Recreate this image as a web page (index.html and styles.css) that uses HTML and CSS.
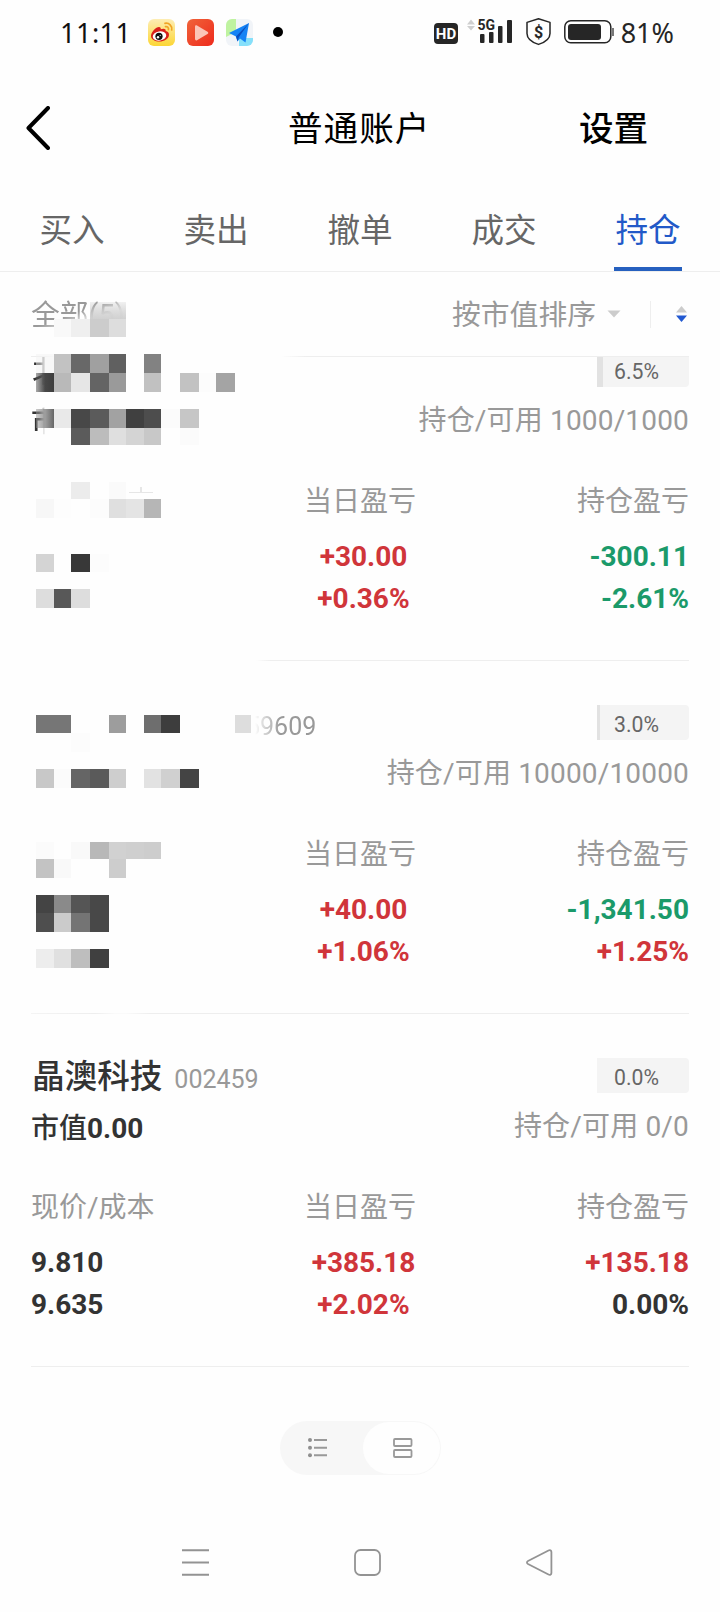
FILE: index.html
```html
<!DOCTYPE html>
<html lang="zh-CN">
<head>
    <meta charset="UTF-8">
    <meta name="viewport" content="width=device-width, initial-scale=1.0">
    <title>普通账户</title>
    <link rel="stylesheet" href="styles.css">
</head>
<body>
    <div class="status-bar">
        <span class="time">11:11</span>
        <div class="app-icons">
            <svg width="27" height="27" viewBox="0 0 27 27">
                <defs>
                    <linearGradient id="weiboBg" x1="0" y1="0" x2="0" y2="1">
                        <stop offset="0" stop-color="#fdedb4"/><stop offset="1" stop-color="#fcd635"/>
                    </linearGradient>
                </defs>
                <rect width="27" height="27" rx="6" fill="url(#weiboBg)"/>
                <path d="M3 17c0-4 5-9 8-9 1.500 0 2 1 1.700 2.300 2.300-1 5.500-1 5 1.800 2 .5 3.500 1.700 3.300 3.900-.3 4-5 6.500-9.500 6.500S3 20.500 3 17z" fill="#d9201a"/>
                <ellipse cx="11.500" cy="17" rx="6.800" ry="4.600" fill="#fff" transform="rotate(-8 11.500 17)"/>
                <circle cx="11" cy="17.300" r="3.600" fill="#111"/>
                <circle cx="10" cy="18.300" r="1.200" fill="#fff"/>
                <circle cx="12.200" cy="16.300" r=".6" fill="#fff"/>
                <path d="M17 4.300c4-.8 7.500 2.500 6.700 6.700M17.500 7.600c2-.4 3.400 1.200 2.900 3" fill="none" stroke="#f0a325" stroke-width="1.700" stroke-linecap="round"/>
            </svg>
            <svg width="27" height="27" viewBox="0 0 27 27">
                <defs>
                    <linearGradient id="videoBg" x1="0" y1="0" x2="1" y2="1">
                        <stop offset="0" stop-color="#f0643a"/><stop offset="1" stop-color="#ee2a1c"/>
                    </linearGradient>
                </defs>
                <rect width="27" height="27" rx="6" fill="url(#videoBg)"/>
                <path d="M8 7.500v12.500c0 1.200 1 1.700 2 1.200l10.500-6.200c1-.6 1-1.700 0-2.300L10 6.400C9 5.900 8 6.400 8 7.500z" fill="#fbc5b8"/>
            </svg>
            <svg width="27" height="27" viewBox="0 0 27 27">
                <rect width="27" height="27" rx="6" fill="#f1f4f8"/>
                <path d="M6 0h4v13L0 18V6a6 6 0 0 1 6-6z" fill="#bff3a0"/>
                <path d="M13 27V19h14v2a6 6 0 0 1-6 6z" fill="#86e0fa"/>
                <path d="M10 17l2.500 8V19z" fill="#fff"/>
                <path d="M23 4L3 14l7 3.500 1.500 5 2.500-3 5.500 4z" fill="#1583f5"/>
                <path d="M23 4L10 17.500l1.500 5 1.300-4.200z" fill="#0a4fc0"/>
            </svg>
            <span class="dot"></span>
        </div>
        <div class="system-icons">
            <svg width="182" height="32" viewBox="432 16 182 32">
                <rect x="434" y="23" width="24" height="21" rx="4" fill="#262626"/>
                <text x="446" y="39" class="hd-text">HD</text>
                <path d="M467 24.500l4-5 4 5zM467 26h8l-4 4.500z" fill="#cfcfcf"/>
                <text x="477.500" y="30" class="net-text">5G</text>
                <g fill="#262626">
                    <rect x="480" y="34" width="4.500" height="9" rx="1"/>
                    <rect x="489" y="32" width="4.500" height="11" rx="1"/>
                    <rect x="498" y="26" width="4.500" height="17" rx="1"/>
                    <rect x="507" y="20" width="5" height="23" rx="1"/>
                </g>
                <path d="M538.500 18.800l11.500 3.600v11c0 5.500-5.500 9-11.500 11-6-2-11.500-5.500-11.500-11v-11z" fill="none" stroke="#262626" stroke-width="1.500" stroke-linejoin="round"/>
                <text x="538.500" y="37.500" class="shield-text">$</text>
                <rect x="564.800" y="20.800" width="46" height="22" rx="6" fill="none" stroke="#262626" stroke-width="1.500"/>
                <rect x="568" y="24" width="33" height="16" rx="3" fill="#262626"/>
                <rect x="612" y="28" width="2" height="8" fill="#777"/>
            </svg>
            <span class="battery">81%</span>
        </div>
    </div>

    <div class="header">
        <svg class="back" width="24" height="44" viewBox="0 0 24 44">
            <path d="M22 2L2.500 22 22 42" fill="none" stroke="#000" stroke-width="4" stroke-linecap="round" stroke-linejoin="round"/>
        </svg>
        <span class="title">普通账户</span>
        <span class="settings">设置</span>
    </div>

    <div class="tabs">
        <div class="tab"><span>买入</span></div>
        <div class="tab"><span>卖出</span></div>
        <div class="tab"><span>撤单</span></div>
        <div class="tab"><span>成交</span></div>
        <div class="tab active"><span>持仓</span></div>
    </div>

    <div class="filter">
        <span class="all">全部(5)</span>
        <div class="sort">
            <span>按市值排序</span>
            <svg width="14" height="8" viewBox="0 0 14 8"><path d="M.5.500h13L7 7.500z" fill="#ccc"/></svg>
            <i class="divider"></i>
            <svg width="11" height="16" viewBox="0 0 11 16">
                <path d="M0 6.500L5.500 0 11 6.500z" fill="#ccc"/>
                <path d="M0 9.500h11L5.500 16z" fill="#2259d1"/>
            </svg>
        </div>
    </div>

    <div class="list">
        <div class="card first">
            <div class="card-top">
                <div class="name"><span class="rest rest-name">北</span></div>
                <div class="badge"><i style="width: 6.5%"></i><span>6.5%</span></div>
            </div>
            <div class="card-sub">
                <div class="value"><span class="rest">市</span></div>
                <div class="hold">持仓/可用 1000/1000</div>
            </div>
            <div class="cols">
                <div class="col left"></div>
                <div class="col mid">
                    <div class="label">当日盈亏</div>
                    <div class="num red">+30.00</div>
                    <div class="num red">+0.36%</div>
                </div>
                <div class="col right">
                    <div class="label">持仓盈亏</div>
                    <div class="num green">-300.11</div>
                    <div class="num green">-2.61%</div>
                </div>
            </div>
        </div>

        <div class="card second">
            <div class="card-top">
                <div class="name"><span class="code faded">59609</span></div>
                <div class="badge"><i style="width: 3%"></i><span>3.0%</span></div>
            </div>
            <div class="card-sub">
                <div class="value"></div>
                <div class="hold">持仓/可用 10000/10000</div>
            </div>
            <div class="cols">
                <div class="col left"></div>
                <div class="col mid">
                    <div class="label">当日盈亏</div>
                    <div class="num red">+40.00</div>
                    <div class="num red">+1.06%</div>
                </div>
                <div class="col right">
                    <div class="label">持仓盈亏</div>
                    <div class="num green">-1,341.50</div>
                    <div class="num red">+1.25%</div>
                </div>
            </div>
        </div>

        <div class="card">
            <div class="card-top">
                <div class="name">晶澳科技<span class="code">002459</span></div>
                <div class="badge"><span>0.0%</span></div>
            </div>
            <div class="card-sub">
                <div class="value">市值<b>0.00</b></div>
                <div class="hold">持仓/可用 0/0</div>
            </div>
            <div class="cols">
                <div class="col left">
                    <div class="label">现价/成本</div>
                    <div class="num">9.810</div>
                    <div class="num">9.635</div>
                </div>
                <div class="col mid">
                    <div class="label">当日盈亏</div>
                    <div class="num red">+385.18</div>
                    <div class="num red">+2.02%</div>
                </div>
                <div class="col right">
                    <div class="label">持仓盈亏</div>
                    <div class="num red">+135.18</div>
                    <div class="num">0.00%</div>
                </div>
            </div>
        </div>
    </div>

    <div class="switch">
        <div class="switch-item">
            <svg width="19" height="20" viewBox="0 0 19 20">
                <path d="M6 2h13M6 9.700h13M6 17.300h13" stroke="#999" stroke-width="2"/>
                <g fill="#8f8f8f"><circle cx="2" cy="2" r="2"/><circle cx="2" cy="9.700" r="2"/><circle cx="2" cy="17.300" r="2"/></g>
            </svg>
        </div>
        <div class="switch-item on">
            <svg width="20" height="20" viewBox="0 0 20 20">
                <g fill="none" stroke="#999" stroke-width="1.800"><rect x="1" y="1" width="17.500" height="7" rx="1"/><rect x="1" y="12" width="17.500" height="7" rx="1"/></g>
            </svg>
        </div>
    </div>

    <div class="nav-bar">
        <svg width="27" height="27" viewBox="0 0 27 27"><path d="M0 1.200h27M0 13.500h27M0 25.700h27" stroke="#939393" stroke-width="2"/></svg>
        <svg width="27" height="27" viewBox="0 0 27 27"><rect x="1" y="1" width="25" height="25" rx="5.500" fill="none" stroke="#939393" stroke-width="1.800"/></svg>
        <svg width="27" height="27" viewBox="0 0 27 27"><path d="M22.500 1.500L2 12c-1.400.8-1.400 2.200 0 3l20.500 10.500c1.500.8 2.900 0 2.900-1.500V3c0-1.500-1.400-2.300-2.900-1.500z" fill="none" stroke="#939393" stroke-width="1.800"/></svg>
    </div>

    <svg class="mosaic" id="mosaic" width="720" height="1612" viewBox="0 0 720 1612">
        <defs>
            <linearGradient id="fade" x1="0" y1="0" x2="0" y2="1">
                <stop offset="0" stop-color="#bbb" stop-opacity=".2"/><stop offset="1" stop-color="#ccc" stop-opacity=".9"/>
            </linearGradient>
            <linearGradient id="side" x1="0" y1="0" x2="1" y2="0">
                <stop offset="0" stop-color="#555" stop-opacity=".5"/><stop offset=".5" stop-color="#484848"/><stop offset="1" stop-color="#3e3e3e"/>
            </linearGradient>
            <linearGradient id="side2" x1="0" y1="0" x2="1" y2="0">
                <stop offset="0" stop-color="#999" stop-opacity=".5"/><stop offset="1" stop-color="#656565"/>
            </linearGradient>
        </defs>
        <rect x="90" y="302" width="36" height="17" fill="url(#fade)"/>
        <rect x="36" y="373" width="18" height="19" fill="url(#side)"/>
        <rect x="36" y="409" width="18" height="19" fill="url(#side2)"/>
        <path d="M129 492.500h24M141 487v5" stroke="#e6e6e6" stroke-width="1.500"/>
    </svg>

    <script>
// 每列的左右邊界
const edges = [36, 54, 71, 90, 109, 126, 144, 161, 180, 199, 216, 235, 251];

// [上, 下, 各列顏色]，空字串表示不畫
const rows = [
    [319, 337, ',f9f9f9,efefef,cccccc,dddddd'],
    [354, 373, 'f1f1f1,c2c2c2,686868,a0a0a0,606060,,828282'],
    [373, 392, ',b9b9b9,e6e6e6,646464,9a9a9a,,c1c1c1,,c2c2c2,fcfcfc,a4a4a4'],
    [409, 428, ',e9e9e9,484848,5b5b5b,a2a2a2,404040,4d4d4d,fbfbfb,c6c6c6'],
    [428, 445, ',,5b5b5b,bcbcbc,dfdfdf,d4d4d4,c8c8c8,,fbfbfb'],
    [482, 499, ',,ececec,,fafafa'],
    [499, 518, 'f7f7f7,fdfdfd,,fcfcfc,dfdfdf,e4e4e4,b6b6b6'],
    [554, 572, 'd4d4d4,,383838,fcfcfc'],
    [589, 608, 'dddddd,585858,dddddd'],
    [715, 733, '767676,767676,,,9d9d9d,,6e6e6e,3d3d3d,,,,dddddd'],
    [733, 752, ',,fcfcfc'],
    [769, 788, 'c8c8c8,fbfbfb,656565,5a5a5a,cecece,,e2e2e2,d0d0d0,444444'],
    [842, 859, 'fbfbfb,,f9f9f9,b8b8b8,d1d1d1,cfcfcf,cdcdcd'],
    [859, 878, 'c3c3c3,f9f9f9,,,cdcdcd'],
    [895, 913, '444444,8a8a8a,555555,484848'],
    [913, 932, '4e4e4e,cbcbcb,747474,484848'],
    [949, 968, 'ededed,e0e0e0,bebebe,404040']
];

const mosaic = document.getElementById('mosaic');

rows.forEach(([top, bottom, colors]) => {
    colors.split(',').forEach((color, i) => {
        if (!color) return;
        const rect = document.createElementNS('http://www.w3.org/2000/svg', 'rect');
        rect.setAttribute('x', edges[i]);
        rect.setAttribute('y', top);
        rect.setAttribute('width', edges[i + 1] - edges[i]);
        rect.setAttribute('height', bottom - top);
        rect.setAttribute('fill', '#' + color);
        // 第一格半透明，露出下面的字
        if (top === 354 && i === 0) rect.setAttribute('opacity', '0.5');
        mosaic.appendChild(rect);
    });
});
    </script>
</body>
</html>
```
FILE: styles.css
```css
body {
    position: relative;
    margin: 0;
    width: 720px;
    height: 1612px;
    overflow: hidden;
    background-color: #fefefe;
    color: #333;
    font-family: Roboto, "Noto Sans CJK SC", sans-serif;
}

svg {
    display: block;
    flex: none;
}

.status-bar {
    display: flex;
    align-items: center;
    height: 64px;
    padding: 0 45px 0 60px;
    color: #111;
    font-family: "Noto Sans", sans-serif;
    font-size: 27px;
}

.time {
    width: 88px;
    letter-spacing: 0.5px;
    white-space: nowrap;
}

.app-icons {
    display: flex;
    align-items: center;
    gap: 12px;
}

.dot {
    width: 10px;
    height: 10px;
    margin-left: 8px;
    border-radius: 50%;
    background: #000;
}

.system-icons {
    display: flex;
    align-items: center;
    gap: 7px;
    margin-left: auto;
    margin-right: 1px;
}

.battery {
    color: #262626;
}

.hd-text,
.net-text,
.shield-text {
    font-family: Roboto, sans-serif;
    font-weight: 700;
    fill: #262626;
}

.hd-text {
    font-size: 15px;
    fill: #fff;
    text-anchor: middle;
}

.net-text {
    font-size: 14px;
}

.shield-text {
    font-size: 16px;
    text-anchor: middle;
}

.header {
    display: flex;
    align-items: center;
    height: 128px;
    color: #000;
    font-size: 34.6px;
    line-height: 40px;
}

.back {
    margin-left: 26px;
}

.title {
    margin: 2px 0 0 238px;
    width: 291px;
    letter-spacing: 1px;
}

.settings {
    margin-top: 2px;
    font-weight: 500;
}

.tabs {
    display: flex;
    height: 79px;
    border-bottom: 1px solid #eee;
    font-size: 32.6px;
    color: #666;
}

.tab {
    flex: 1;
    display: flex;
    justify-content: center;
}

.tab span {
    height: 75px;
    padding: 0 1px;
    line-height: 78px;
}

.tab.active span {
    color: #2259c8;
    border-bottom: 4px solid #2660bf;
}

.filter {
    display: flex;
    justify-content: space-between;
    align-items: center;
    height: 84px;
    margin: 0 31px;
    padding-right: 2px;
    border-bottom: 1px solid;
    border-image: linear-gradient(to right, #eee 0, #eee 10px, transparent 25px, transparent 250px, #eee 275px) 1;
    font-size: 28.8px;
    color: #999;
}

.filter span {
    height: 84px;
    line-height: 87px;
}

.all {
    -webkit-mask-image: linear-gradient(160deg, #000 48%, rgba(0, 0, 0, 0.1) 60%);
    mask-image: linear-gradient(160deg, #000 48%, rgba(0, 0, 0, 0.1) 60%);
}

.sort {
    display: flex;
    align-items: center;
}

.sort svg {
    margin-left: 11px;
}

.divider {
    width: 1px;
    height: 27px;
    margin: 0 14px 0 29px;
    background: #eee;
}

.list {
    overflow: hidden;
}

.card {
    box-sizing: border-box;
    height: 353px;
    margin: 0 31px;
    padding-top: 44px;
    border-bottom: 1px solid #eee;
}

.card.first {
    margin-top: -49px;
    border-image: linear-gradient(to right, transparent 225px, #eee 240px) 1;
}

.card.second {
    border-image: linear-gradient(to right, #f4f4f4 0, #eee 65px, #fafafa 85px, #fafafa 95px, #eee 120px) 1;
}

.card-top,
.card-sub {
    display: flex;
    justify-content: space-between;
}

.card-top {
    height: 35px;
}

.name {
    padding-left: 1px;
    font-size: 32.6px;
    font-weight: 500;
    line-height: 38px;
    white-space: nowrap;
}

.code {
    margin-left: 12px;
    font-size: 25px;
    font-weight: 400;
    color: #999;
}

.code.faded {
    display: inline-block;
    margin-left: 214px;
    line-height: 36px;
    -webkit-mask-image: linear-gradient(to right, transparent 9px, rgba(0, 0, 0, 0.25) 15px, #000 34px);
    mask-image: linear-gradient(to right, transparent 9px, rgba(0, 0, 0, 0.25) 15px, #000 34px);
}

/* 馬賽克旁邊剩下的半個字 */
.rest {
    display: inline-block;
    -webkit-mask-image: linear-gradient(to right, #000 8px, transparent 14px);
    mask-image: linear-gradient(to right, #000 8px, transparent 14px);
}

.rest-name {
    font-weight: 400;
}

.badge {
    position: relative;
    box-sizing: border-box;
    width: 92px;
    height: 35px;
    padding-left: 17px;
    border-radius: 0 4px 4px 0;
    overflow: hidden;
    background: #f4f4f4;
    color: #666;
    font-size: 21.2px;
    line-height: 39px;
}

.badge i {
    position: absolute;
    left: 0;
    top: 0;
    height: 100%;
    background: #e2e2e2;
}

.card-sub {
    height: 50px;
    margin-top: 10px;
    font-size: 28px;
    line-height: 48px;
}

.value {
    font-weight: 500;
    line-height: 52px;
}

.value b {
    font-weight: 700;
}

.hold,
.label {
    color: #999;
}

.hold {
    letter-spacing: 0.17px;
}

.cols {
    display: flex;
    justify-content: space-between;
    margin-top: 33px;
    font-size: 28px;
}

.col {
    width: 200px;
}

.mid {
    text-align: center;
}

.mid .num {
    padding-left: 7px;
}

.right {
    text-align: right;
}

.label {
    height: 56px;
    line-height: 44px;
}

.num {
    font-weight: 700;
    line-height: 42px;
}

.red {
    color: #d0353a;
}

.green {
    color: #1b9a6a;
}

.switch {
    display: flex;
    box-sizing: border-box;
    width: 161px;
    height: 54px;
    margin: 54px 0 0 280px;
    padding: 1px;
    border-radius: 27px;
    background: #f7f7f7;
}

.switch-item {
    display: flex;
    box-sizing: border-box;
    flex: 1;
    justify-content: center;
    align-items: center;
    padding-right: 9px;
}

.switch-item.on {
    flex: none;
    width: 77px;
    padding: 0 0 0 3px;
    border-radius: 26px;
    background: #fefefe;
}

.nav-bar {
    display: flex;
    gap: 145px;
    margin: 74px 0 0 182px;
}

.mosaic {
    position: absolute;
    left: 0;
    top: 0;
    pointer-events: none;
    shape-rendering: crispEdges;
}
```
